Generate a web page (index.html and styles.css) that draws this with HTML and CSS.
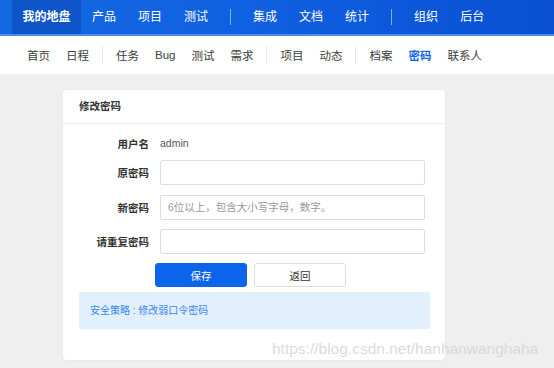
FILE: index.html
```html
<!DOCTYPE html>
<html lang="zh">
<head>
<meta charset="utf-8">
<link rel="stylesheet" href="styles.css">
</head>
<body>
<header class="topbar">
  <nav class="mainnav">
    <a class="mi active">我的地盘</a>
    <a class="mi">产品</a>
    <a class="mi">项目</a>
    <a class="mi">测试</a>
    <span class="msep"></span>
    <a class="mi">集成</a>
    <a class="mi">文档</a>
    <a class="mi">统计</a>
    <span class="msep"></span>
    <a class="mi">组织</a>
    <a class="mi">后台</a>
  </nav>
</header>
<nav class="subnav">
  <a class="si">首页</a>
  <a class="si">日程</a>
  <span class="ssep"></span>
  <a class="si">任务</a>
  <a class="si">Bug</a>
  <a class="si">测试</a>
  <a class="si">需求</a>
  <span class="ssep"></span>
  <a class="si">项目</a>
  <a class="si">动态</a>
  <span class="ssep"></span>
  <a class="si">档案</a>
  <a class="si current">密码</a>
  <a class="si">联系人</a>
</nav>
<main class="content">
  <section class="card">
    <div class="card-head">修改密码</div>
    <form class="form">
      <div class="row first"><label class="lbl">用户名</label><span class="val">admin</span></div>
      <div class="row"><label class="lbl">原密码</label><input class="inp" type="password"></div>
      <div class="row"><label class="lbl">新密码</label><input class="inp" type="text" placeholder="6位以上，包含大小写字母，数字。"></div>
      <div class="row"><label class="lbl">请重复密码</label><input class="inp" type="password"></div>
      <div class="actions">
        <button type="button" class="btn primary">保存</button>
        <button type="button" class="btn">返回</button>
      </div>
      <div class="tip">安全策略 : 修改弱口令密码</div>
    </form>
  </section>
  <div class="watermark">https://blog.csdn.net/hanhanwanghaha</div>
</main>
</body>
</html>
```
FILE: styles.css
```css
* { box-sizing: border-box; }
html, body { margin: 0; padding: 0; }
body {
  width: 554px;
  height: 368px;
  overflow: hidden;
  background: #efefef;
  font-family: "Liberation Sans", "Noto Sans CJK SC", sans-serif;
  font-size: 10.5px;
  color: #333;
}
.topbar {
  height: 36px;
  background: linear-gradient(90deg, #1469e2 0%, #0f5fe0 50%, #0a4fd2 100%);
  border-bottom: 2px solid #4a8cf0;
}
.mainnav {
  display: flex;
  align-items: center;
  height: 34px;
  padding-left: 12px;
}
.mi {
  color: #fff;
  font-size: 12px;
  height: 34px;
  line-height: 34px;
  padding: 0 11px;
}
.mi.active {
  background: #0d55c8;
  font-weight: bold;
  padding: 0 10.5px;
}
.msep {
  width: 1px;
  height: 16px;
  background: rgba(255,255,255,0.5);
  margin: 0 11px;
}
.subnav {
  display: flex;
  align-items: center;
  height: 38px;
  background: #fff;
  padding-left: 19px;
}
.si {
  font-size: 11.5px;
  color: #3c3c3c;
  padding: 0 8px;
}
.si.current { color: #0c64eb; font-weight: bold; }
.ssep {
  width: 1px;
  height: 18px;
  background: #e8e8e8;
  margin: 0 5px;
}
.content {
  position: relative;
  padding: 16px 0 0 63px;
}
.card {
  width: 382px;
  height: 270px;
  background: #fff;
  border-radius: 4px;
  box-shadow: 0 0 2px rgba(0,0,0,0.08);
}
.card-head {
  height: 34px;
  line-height: 33px;
  padding-left: 16px;
  font-weight: bold;
  font-size: 10.5px;
  color: #333;
  border-bottom: 1px solid #f0f0f0;
}
.form {
  padding: 10px 16px 0 16px;
}
.row {
  display: flex;
  align-items: center;
  height: 25px;
  margin-bottom: 9.5px;
}
.row.first { height: 18px; margin-bottom: 8px; }
.lbl {
  width: 70px;
  text-align: right;
  font-weight: bold;
  color: #333;
}
.val {
  margin-left: 11px;
  color: #555;
}
.inp {
  margin-left: 11px;
  width: 265px;
  height: 25px;
  border: 1px solid #ddd;
  border-radius: 2px;
  padding: 0 7px;
  font-family: inherit;
  font-size: 10.5px;
  color: #333;
  outline: none;
}
.inp::placeholder { color: #999; }
.actions {
  display: flex;
  gap: 7px;
  padding-left: 76px;
  margin-top: -0.5px;
}
.btn {
  width: 92px;
  height: 24px;
  border: 1px solid #ddd;
  border-radius: 3px;
  background: #fff;
  color: #333;
  font-family: inherit;
  font-size: 10.5px;
}
.btn.primary {
  background: #0c64eb;
  border-color: #0c64eb;
  color: #fff;
}
.tip {
  margin-top: 5px;
  height: 37px;
  line-height: 37px;
  width: 351px;
  background: #e2f0fd;
  border-radius: 2px;
  padding-left: 11px;
  color: #3a88ef;
  font-size: 10px;
}
.watermark {
  position: absolute;
  left: 272px;
  top: 266px;
  font-family: "Liberation Sans", Arial, sans-serif;
  font-size: 15.5px;
  color: rgba(212,212,212,0.85);
  white-space: nowrap;
}
```
